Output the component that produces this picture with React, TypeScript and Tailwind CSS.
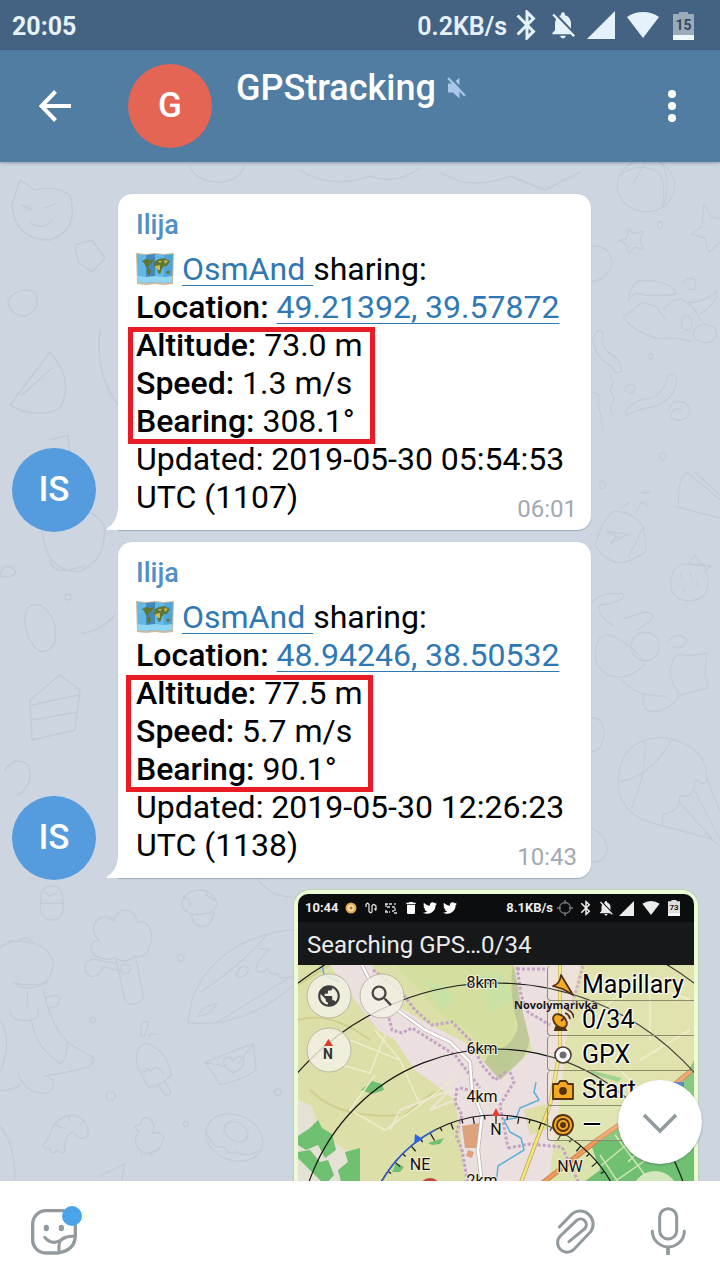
import type { ReactNode } from "react";
import { MdBluetooth, MdNotificationsOff, MdPublic, MdSearch, MdDelete } from "react-icons/md";
import { FaTwitter } from "react-icons/fa";

const rad = (deg: number) => (deg * Math.PI) / 180;

function SignalIcon({ className }: { className: string }) {
  return (
    <svg className={className} viewBox="0 0 28 28" fill="currentColor" aria-hidden="true">
      <path d="M28 0V28H0Z" />
    </svg>
  );
}

function WifiIcon({ className }: { className: string }) {
  return (
    <svg className={className} viewBox="0 0 32 26" fill="currentColor" aria-hidden="true">
      <path d="M16 26 0 5Q7 0 16 0T32 5Z" />
    </svg>
  );
}

function Battery({ level, fill, className, text }: { level: string; fill: string; className: string; text: string }) {
  return (
    <svg className={className} viewBox="0 0 21 28" aria-label={`Battery ${level}%`}>
      <path d="M6 0H15V2H21V28H0V2H6Z" fill={fill} />
      <path d="M0 23H21V28H0Z" fill="#f1f8fd" />
      <text x="10.5" y="18" textAnchor="middle" className={text}>
        {level}
      </text>
    </svg>
  );
}

function StatusBar() {
  return (
    <div className="flex h-[50px] shrink-0 items-center justify-between bg-[#446282] pl-3 pr-[26px] pt-1 text-[25px] font-bold text-[#e6f2fb]">
      <span>20:05</span>
      <div className="flex items-center">
        <span className="font-semibold">0.2KB/s</span>
        <MdBluetooth className="ml-0.5 size-9 -mt-1" />
        <MdNotificationsOff className="ml-0.5 size-8 -mt-1" />
        <SignalIcon className="ml-2 size-7 -mt-1" />
        <WifiIcon className="ml-3 h-[26px] w-8 -mt-1" />
        <Battery level="15" fill="#9aabba" className="ml-3.5 h-7 w-[21px] -mt-0.5" text="fill-[#34495e] text-[14px] font-bold" />
      </div>
    </div>
  );
}

function Header() {
  return (
    <header className="relative z-10 flex h-28 shrink-0 items-center bg-[#517da2] text-white shadow-[0_1px_3px_rgba(70,90,120,0.5)]">
      <button type="button" aria-label="Back" className="ml-[39px] size-8">
        <svg viewBox="0 0 32 32" fill="none" stroke="currentColor" strokeWidth="4" className="size-8">
          <path d="M32 16H3M16.500 1.500 2.500 16 16.500 30.500" />
        </svg>
      </button>
      <div className="ml-[57px] flex size-[84px] items-center justify-center rounded-full bg-[#e56555] text-[35px] font-medium">G</div>
      <div className="ml-6 mt-4 flex flex-1 items-center gap-[11px] self-start">
        <h1 className="text-[36px] font-medium leading-[44px]">GPStracking</h1>
        <svg viewBox="0 0 19 22" className="h-[22px] w-[19px]" role="img" aria-label="Muted">
          <path d="M1 6.500H5L12.500 1V21.500L6 15.500H1Z" fill="#a9c8e8" />
          <path d="M3 0 19 16.500" stroke="#517da2" strokeWidth="2.200" />
          <path d="M1 1 18 18.800" stroke="#a9c8e8" strokeWidth="2.200" />
        </svg>
      </div>
      <button type="button" aria-label="More options" className="mr-8 flex w-8 flex-col items-center gap-1">
        <span className="size-2 rounded-full bg-white" />
        <span className="size-2 rounded-full bg-white" />
        <span className="size-2 rounded-full bg-white" />
      </button>
    </header>
  );
}

function Wallpaper() {
  return (
    <svg
      className="absolute inset-0 size-full"
      viewBox="0 162 720 1019"
      preserveAspectRatio="xMinYMin slice"
      fill="none"
      stroke="#c2cad8"
      strokeWidth="1.500"
      strokeLinecap="round"
      strokeLinejoin="round"
      aria-hidden="true"
    >
      <g transform="translate(0 860) scale(.3333)" strokeWidth="4">
        <path d="M122 120Q122 78 155 78T189 120Q195 180 155 180T122 120M125 130H188M135 95 150 110 170 98" />
        <path d="M345 292C320 305 278 295 272 265C272 245 290 240 300 243C275 225 272 185 305 172C325 168 340 175 342 188C345 140 400 135 412 187C445 178 462 215 452 250C445 285 420 298 405 288C385 308 360 305 345 292M348 298 375 420Q385 435 405 432 430 425 430 408L408 295M348 330 310 320Q300 350 275 350 250 340 255 312 275 290 300 302L350 310" />
        <circle cx="376" cy="326" r="15" />
        <path d="M545 135Q550 92 600 90 645 95 652 135 640 160 610 162 560 170 545 135M575 165Q580 200 610 200 640 190 641 158M550 110Q575 120 570 140M620 92Q615 110 645 120" />
        <path d="M565 488Q570 400 620 340 700 230 880 208M565 488Q640 500 740 465 820 430 880 375M605 395Q740 300 800 225M650 488 880 345M595 470Q600 440 650 430 640 460 595 470M780 265 810 268Q770 300 768 330 790 345 800 325 810 345 835 340 825 360 880 350" />
        <ellipse cx="728" cy="335" rx="20" ry="13" transform="rotate(-40 728 335)" />
        <path d="M0 262Q30 240 75 245 150 255 160 310 158 350 130 370 80 380 40 368M50 373Q80 400 145 365M82 395V440M130 390Q150 490 200 545 250 580 280 590 285 620 240 628 180 640 135 648M95 485Q105 560 180 610 205 600 200 545M55 640Q70 700 140 700 165 690 160 660L135 645M30 455Q35 480 70 482 120 485 115 450M135 415Q175 395 180 420 175 445 145 445M0 692Q40 690 60 675M25 245Q35 235 48 245M60 240Q75 225 98 245" />
        <circle cx="542" cy="293" r="10" />
        <circle cx="278" cy="480" r="8" />
        <circle cx="332" cy="708" r="14" />
        <circle cx="833" cy="697" r="10" />
        <circle cx="558" cy="792" r="8" />
        <path d="M412 620Q400 560 440 550 500 570 515 645 480 680 445 682ZM420 635Q440 640 440 625 455 640 465 622 485 625 490 640M475 675 495 705Q510 710 512 695L495 665M425 490Q435 480 446 488L432 530 422 525ZM445 530Q455 515 475 525" />
        <path d="M615 607 760 550 768 630Q720 665 660 673ZM615 607 680 620M760 550 715 610" />
        <path d="M700 638Q665 620 672 598 690 585 700 602 715 580 732 595 735 625 700 638" />
        <path d="M128 855Q150 835 155 805 180 765 220 765 265 780 265 825 240 850 220 815 190 830 195 875 180 885 172 870 155 890 148 865 135 870 128 855M165 795 195 805M205 768 210 785M255 780 240 795" />
        <path d="M415 815 403 800 420 795Q425 770 445 773 470 790 458 820 495 815 490 840 480 880 435 880 395 860 410 825M425 880V890M450 880 458 888" />
        <ellipse cx="703" cy="833" rx="88" ry="68" transform="rotate(22 703 833)" />
        <ellipse cx="708" cy="815" rx="38" ry="27" transform="rotate(28 708 815)" />
        <path d="M620 815Q640 870 670 860 690 890 710 875 740 895 780 870" />
        <path d="M295 950 375 912 365 960M0 800Q45 850 45 960M0 480Q40 540 0 640" />
        <path d="M770 55Q810 110 880 112" />
      </g>
      <g transform="translate(580 160) scale(.3333 .459)" strokeWidth="3">
        <ellipse cx="198" cy="56" rx="86" ry="57" />
        <path d="M115 35Q180 0 240 30 260 60 245 105M200 0 160 50M245 5Q275 50 250 100" />
        <path d="M118 175 140 172 145 150 160 160 188 155 180 175 190 195 165 190 145 203 140 185ZM335 162 365 145 372 95 395 125 420 128M335 162 375 170 385 202 420 180" />
        <path d="M35 187Q90 185 97 225 85 260 35 265M145 305Q150 265 190 262 280 265 290 292 220 300 165 290ZM130 343Q160 325 185 310L230 320 255 348M130 343Q160 375 240 390 290 385 335 395M250 325Q280 300 305 303 350 320 360 350M325 310Q380 310 410 285 415 310 360 335M310 270Q325 250 345 262 355 285 325 282" />
        <ellipse cx="375" cy="378" rx="35" ry="20" />
        <circle cx="320" cy="355" r="16" />
        <path d="M38 390Q55 360 70 378 60 400 85 420 120 430 125 460 105 470 95 450 45 430 38 390M135 550Q160 520 215 520 260 500 262 470 280 460 290 475 290 520 220 538 180 540 140 556ZM265 545Q275 520 315 528 340 545 320 562 280 575 272 555 285 535 305 545" />
        <path d="M90 470 100 485 90 500 102 520 92 540 98 560M35 505Q65 510 55 530L70 590M132 505Q140 482 165 492 165 512 145 508M295 750Q295 690 320 680L420 740M285 755 420 780M345 680 420 730" />
        <path d="M45 840Q65 785 100 765 160 765 190 800 200 840 195 855 130 885 100 875 60 860 45 840M80 810 145 815 90 835 110 820ZM190 800 145 865M130 755 150 745M165 770 185 745 205 755M185 725 210 725" />
        <path d="M272 920Q275 880 325 880L375 885Q395 930 370 950 325 970 290 952 270 940 272 920M325 880 345 860 360 880 395 885 370 895M300 900 305 910M330 900 335 910M350 920 355 930M310 930 315 940" />
        <path d="M35 965Q60 940 130 945 145 960 60 970 45 990 100 1015M130 1000 195 985Q230 985 210 1005L170 1025M45 1080Q50 1030 90 1035 170 1060 195 1100 130 1140 80 1120 45 1105 45 1080M265 1050Q290 1025 320 1045 315 1070 280 1060M275 1100Q280 1070 320 1080L380 1075 375 1120 385 1150 300 1165Q260 1130 275 1100M190 1165Q180 1210 240 1200 310 1180 290 1155M125 1130Q160 1170 260 1168" />
        <ellipse cx="196" cy="1060" rx="42" ry="31" />
        <path d="M115 1350Q120 1260 250 1258 380 1275 380 1345 385 1370 345 1350 345 1390 300 1385 300 1420 250 1425L245 1450Q110 1430 115 1350M195 1265Q200 1340 155 1410M275 1260Q220 1340 120 1355M245 1450 390 1478 420 1495M380 1345 420 1420M345 1375 420 1480M300 1400 395 1478" />
        <path d="M35 1215Q70 1215 72 1250 65 1290 35 1288M35 1455Q80 1470 82 1505 75 1530 35 1530" />
        <circle cx="213" cy="428" r="6" />
        <circle cx="248" cy="645" r="8" />
        <circle cx="68" cy="708" r="9" />
        <circle cx="240" cy="142" r="8" />
      </g>
      <path d="M12 205 20 180 35 190Q55 185 70 195 80 230 50 240 15 240 12 205M22 205 32 210M45 208 55 204M30 222Q42 232 52 220M190 166C195 185 235 190 245 166M300 170Q330 190 370 176 395 186 420 168M440 172Q470 192 510 176L545 190 580 172" />
      <path d="M8 300Q20 285 35 292 42 310 25 316 10 316 8 300M75 245 92 240 105 258 92 272 78 262ZM10 405 50 352Q75 380 60 408 35 420 10 405M22 395 52 368M100 330Q95 375 118 405" />
      <path d="M50 440 68 435 70 455M42 530Q45 570 78 572 108 560 104 525 92 508 78 512M50 560Q52 572 68 570L84 566M0 576Q4 560 15 570 18 578 0 576M25 620Q25 600 42 606 60 620 54 645 40 660 30 640 25 630 25 620M82 633Q100 632 115 615M30 700 60 675 80 690 75 730 32 740ZM32 705 78 695M32 720 78 712M5 770Q15 755 28 765 35 785 18 795" />
      <circle cx="68" cy="597" r="3" />
    </svg>
  );
}

function MapEmoji() {
  return (
    <svg viewBox="0 0 38 34" className="mr-2 inline-block h-[34px] w-[38px] align-[-6px]" role="img" aria-label="World map">
      <path d="M0 1 10 2 19 1 28 2 38 1 37 32 28 33 19 32 10 33 1 32Z" fill="#cdbb9f" />
      <path d="M1 2 10 3V31L2 30Z" fill="#63b7e2" />
      <path d="M10 3 19 2V30L10 31Z" fill="#4489bb" />
      <path d="M19 2 28 3V31L19 30Z" fill="#63b9e6" />
      <path d="M28 3 37 2 36 30 28 31Z" fill="#4fa5d6" />
      <path d="M1 24 10 25 19 24 28 25 36 24V30L28 31 19 30 10 31 2 30Z" fill="#8fd6f4" />
      <path d="M6 9 10 7 15 8 18 7 16 11 13 13 12 16 10 15 8 11ZM12 16 15 18 14 23 12 23 11 18ZM19 9 23 7 28 6 34 9 31 14 28 14 26 17 24 22 22 21 21 16 18 14ZM31 19 34 19 33 22 30 21Z" fill="#5f7634" />
      <path d="M19 14 24 13 24 18 22 18ZM28 8 32 9 29 12ZM22 9 26 9 24 11Z" fill="#cdbc48" />
    </svg>
  );
}

type Message = {
  coords: string;
  altitude: string;
  speed: string;
  bearing: string;
  updated: string;
  time: string;
  frame: string;
};

const messages: Message[] = [
  {
    coords: "49.21392, 39.57872",
    altitude: "73.0 m",
    speed: "1.3 m/s",
    bearing: "308.1°",
    updated: "2019-05-30 05:54:53 UTC (1107)",
    time: "06:01",
    frame: "-left-2",
  },
  {
    coords: "48.94246, 38.50532",
    altitude: "77.5 m",
    speed: "5.7 m/s",
    bearing: "90.1°",
    updated: "2019-05-30 12:26:23 UTC (1138)",
    time: "10:43",
    frame: "-left-2.5",
  },
];

function Field({ label, children }: { label: string; children: ReactNode }) {
  return (
    <p>
      <b className="font-medium">{`${label}:`}</b> {children}
    </p>
  );
}

function MessageRow({ message }: { message: Message }) {
  const link = "text-[#3078b4] underline decoration-1 underline-offset-[5px]";
  return (
    <article className="flex items-end pl-3">
      <div className="flex size-[84px] shrink-0 items-center justify-center rounded-full bg-[#549cdd] text-[35px] font-medium text-white">IS</div>
      <div className="relative mb-0.5 ml-[22px] w-[473px] max-w-full rounded-[14px] rounded-bl-none bg-white px-[18px] pb-3.5 pt-[13px] text-[32px] leading-[38px] text-black shadow-[0_1px_1px_#9ca9b8,0_0_1px_#aab6c4]">
        <svg viewBox="0 0 13 24" className="absolute -left-3 bottom-0 h-6 w-[13px]" aria-hidden="true">
          <path d="M13 0H12Q12 16 1 22.500 0 24 2 24H13Z" fill="#fff" />
        </svg>
        <h2 className="mb-[7px] text-[27px] font-medium leading-9 text-[#5090c6]">Ilija</h2>
        <p>
          <MapEmoji />
          <a href="#osmand" className={link}>
            OsmAnd&nbsp;
          </a>
          sharing:
        </p>
        <Field label="Location">
          <a href="#location" className={link}>
            {message.coords}
          </a>
        </Field>
        <div className="relative">
          <Field label="Altitude">{message.altitude}</Field>
          <Field label="Speed">{message.speed}</Field>
          <Field label="Bearing">{message.bearing}</Field>
          <div className={`absolute top-px h-[117px] w-[247px] border-[5px] border-[#e91c26] ${message.frame}`} />
        </div>
        <p>
          {`Updated: ${message.updated}`}
          <time className="float-right -mr-1 mt-[15px] h-5 text-[24px] leading-8 text-[#a1aab3]">{message.time}</time>
        </p>
      </div>
    </article>
  );
}

function MapDrawing() {
  const ticks = Array.from({ length: 35 }, (_, i) => (i - 17) * 5);
  return (
    <svg viewBox="298 965 396 220" className="block w-full" role="img" aria-label="Map with distance rings">
      <rect x="298" y="965" width="396" height="220" fill="#dddfa8" />
      <g fill="#d3de9f">
        <path d="M395 965H520L510 1075Q480 1060 470 1030 440 1020 420 990Z" />
        <path d="M560 1100H640V1185H540Z" fill="#dce2ab" />
      </g>
      <path d="M425 980Q450 985 455 1000L440 1010ZM480 965Q490 980 500 970L512 1000 490 1015Z" fill="#c6e2aa" opacity=".7" />
      <path d="M513 965Q522 1000 530 1012 536 1060 500 1080L482 1066 492 1050Q512 1050 518 1026 508 990 513 965" fill="#a3b487" opacity=".5" />
      <path d="M298 985 330 965M298 1020Q330 1010 370 1040M400 1120Q440 1080 460 1090M310 1090Q340 1120 400 1115" stroke="#d0cf8e" strokeWidth="2" fill="none" />
      {/* Built-up areas */}
      <path d="M330 965H372L388 1000 430 1025 470 1045 482 1060 500 1080 532 1050 520 1000 514 965H580L566 1040 560 1100 548 1185H466L460 1130 455 1100 436 1085 415 1070 395 1040 378 1030 355 1000Z" fill="#ebdfdf" />
      <path d="M298 1100 312 1106 320 1130 345 1150 360 1150 360 1185H298Z" fill="#e3e2d4" />
      <path d="M445 1080 455 1100 430 1110 450 1090 400 1110 390 1130" stroke="#ece6d2" strokeWidth="2" fill="none" />
      <path d="M524 1110 546 1104 550 1128 530 1135Z" fill="#dcdfa6" />
      {/* Woods */}
      <g fill="#6fc070">
        <path d="M298 1136 310 1128 318 1120 322 1128 332 1134 336 1150 325 1158 318 1145 306 1150 298 1145ZM298 1152 310 1150 320 1162 328 1160 334 1175 325 1185 312 1172 298 1158ZM345 1152 360 1148V1185H342L338 1170 348 1162Z" />
        <path d="M361 1090 372 1081 382 1084 384 1090 372 1094Z" />
        <path d="M392 1172 396 1163 404 1167 400 1172ZM428 1143 444 1138 440 1144 432 1145Z" />
        <path d="M592 1147 625 1120 650 1160 640 1185H580L600 1170ZM640 1165 694 1060V1185H630Z" />
        <path d="M590 1070 622 1078 618 1082 592 1074Z" opacity=".7" />
      </g>
      <path d="M600 1155 620 1185M615 1135 645 1175M590 1175 650 1125M610 1185 660 1150M628 1162 650 1140" stroke="#cfe6b4" strokeWidth="1.500" />
      <path d="M462 1126 480 1123 478 1148 465 1148ZM468 1150 474 1152 472 1158 466 1156Z" fill="#dba27b" />
      {/* Field tracks */}
      <g fill="none" stroke="#efeccb" strokeWidth="1.500">
        <path d="M340 1045 325 1060 370 1073 385 1035M350 1040 400 1060 420 1105 385 1130 350 1110 375 1075M420 1105 455 1078M400 1060 375 1030" />
        <path d="M600 1010 640 980 690 1000M640 1060 690 1030M650 975V1040M610 1060 650 1100" />
      </g>
      {/* Rail and district borders */}
      <g fill="none" stroke="#c5a3c4" strokeWidth="3" strokeDasharray="3 2">
        <path d="M373 970 400 990 415 1010 432 1025 452 1022 470 1040 482 1065 495 1080 506 1072" />
        <path d="M389 1018 392 1030 402 1033 412 1028 455 1055 480 1088" />
        <path d="M457 1088 455 1102 462 1115 456 1135 462 1150 468 1185M460 1088 478 1092" />
        <path d="M517 967 521 995 528 1012 550 1025M517 969H545M583 966 572 1005" />
        <path d="M508 1148 530 1144 562 1147 568 1160 580 1185M510 1072 514 1082 500 1105 508 1148" />
      </g>
      {/* Roads */}
      <g fill="none" strokeLinejoin="round">
        <path d="M362 965 372 985 400 1012 425 1030 450 1042 470 1062 472 1090 482 1115 478 1150 482 1185" stroke="#b9b4b0" strokeWidth="4" />
        <path d="M362 965 372 985 400 1012 425 1030 450 1042 470 1062 472 1090 482 1115 478 1150 482 1185" stroke="#fff" strokeWidth="2.500" />
        <path d="M560 965V1050L550 1105 520 1185" stroke="#b9a84e" strokeWidth="4" />
        <path d="M560 965V1050L550 1105 520 1185" stroke="#f5e57a" strokeWidth="2.500" />
        <path d="M540 1185 600 1138 660 1097 692 1070" stroke="#c27743" strokeWidth="5" />
        <path d="M540 1185 600 1138 660 1097 692 1070" stroke="#ef9a5b" strokeWidth="3.500" />
        <path d="M536 1082 534 1092 539 1100 520 1108 516 1118 504 1120 510 1132 521 1138 524 1150 498 1166 496 1185M322 965 324 975 340 982" stroke="#5fb2d8" strokeWidth="1.500" />
      </g>
      {/* Distance rings, 33 px per kilometre */}
      <g fill="none" stroke="#161616" strokeWidth="1.200">
        <circle cx="496" cy="1247" r="330" />
        <circle cx="496" cy="1247" r="264" />
        <circle cx="496" cy="1247" r="198" />
        <circle cx="496" cy="1247" r="132" />
        {ticks.map((deg) => {
          const inner = deg % 30 === 0 ? 123 : deg % 10 === 0 ? 125 : 128;
          const s = Math.sin(rad(deg));
          const c = Math.cos(rad(deg));
          return <path key={deg} d={`M${496 + 132 * s} ${1247 - 132 * c}L${496 + inner * s} ${1247 - inner * c}`} />;
        })}
      </g>
      <path d="M382 1181A132 132 0 0 1 436 1129.500" fill="none" stroke="#3563c9" strokeWidth="1.500" />
      <path d="M415 1134 423 1139 414 1144Z" fill="#2c66e3" />
      <path d="M496 1108 500 1116H492Z" fill="#e63d2c" />
      <circle cx="430" cy="1189" r="11" fill="#c8403c" />
      <circle cx="655" cy="1194" r="23" fill="#eef0cf" opacity=".8" />
      <rect x="670" y="1082" width="14" height="14" fill="#3b6fc9" />
      <g className="font-[Roboto] text-[16px]" textAnchor="middle" fill="#111" stroke="#f1eedc" strokeWidth="2" paintOrder="stroke">
        <text x="482" y="988">8km</text>
        <text x="482" y="1054">6km</text>
        <text x="482" y="1102">4km</text>
        <text x="482" y="1186">2km</text>
        <text x="496" y="1135">N</text>
        <text x="420" y="1170">NE</text>
        <text x="570" y="1172">NW</text>
      </g>
      <g fill="#f3f1e6" fillOpacity=".82" stroke="#b9b8a4" strokeWidth="1">
        <circle cx="329" cy="996" r="22" />
        <circle cx="382" cy="996" r="22" />
        <circle cx="329" cy="1050" r="22" />
      </g>
      <MdPublic x="316" y="983" size={26} color="#3d3d3d" />
      <MdSearch x="368" y="982" size={28} color="#4a4540" />
      <path d="M328.500 1039 333 1046H324Z" fill="#dd3a32" />
      <text x="328" y="1058.500" textAnchor="middle" className="font-[Roboto] text-[14px] font-bold" fill="#333">
        N
      </text>
    </svg>
  );
}

const widgets: { label: string; icon: ReactNode }[] = [
  {
    label: "Mapillary",
    icon: <path d="M9 1 21 21 11 15 1 12Q8 10 9 1Z" fill="#f6ab2a" stroke="#52320f" strokeWidth="1.800" strokeLinejoin="round" />,
  },
  {
    label: "0/34",
    icon: (
      <g stroke="#52320f" strokeWidth="1.800">
        <path d="M4 18 3 21H14L12 18Z" fill="#52320f" />
        <ellipse cx="8" cy="12" rx="5.500" ry="8" transform="rotate(-45 8 12)" fill="#f6a81f" />
        <path d="M9 12 13 8" />
        <path d="M13 4Q17 5 18 10M14 0Q21 2 22 9" fill="none" />
      </g>
    ),
  },
  {
    label: "GPX",
    icon: (
      <g>
        <circle cx="11" cy="11" r="8" fill="#fff" stroke="#4d3c31" strokeWidth="1.600" />
        <circle cx="11" cy="11" r="3.500" fill="#6d6d6d" />
      </g>
    ),
  },
  {
    label: "Start",
    icon: (
      <g stroke="#52320f" strokeWidth="1.800">
        <path d="M1 5H6L8 2H14L16 5H21V20H1Z" fill="#f6a81f" strokeLinejoin="round" />
        <circle cx="11" cy="12" r="3" fill="#52320f" />
      </g>
    ),
  },
  {
    label: "—",
    icon: (
      <g fill="#f6a81f" stroke="#52320f" strokeWidth="1.800">
        <circle cx="11" cy="11" r="10" />
        <circle cx="11" cy="11" r="6" />
        <circle cx="11" cy="11" r="2" fill="#52320f" />
      </g>
    ),
  },
];

function Photo() {
  return (
    <figure className="ml-auto mr-[22px] w-[404px] max-w-full rounded-t-[16px] bg-[#ecfbd6] p-1 shadow-[0_0_1px_1px_#b9d3b4]">
      <div className="overflow-hidden rounded-t-[10px]">
        <div className="flex h-7 items-center bg-[#0c0d0f] pl-[7px] pr-3.5 text-[13px] font-bold text-[#ececec]">
          <span>10:44</span>
          <svg viewBox="0 0 12 12" className="ml-1.5 size-3" aria-hidden="true">
            <circle cx="6" cy="6" r="5.500" fill="#e0a64a" />
            <circle cx="6" cy="6" r="3.500" fill="#f5ddb0" />
            <circle cx="6" cy="6" r="1.500" fill="#b27a30" />
          </svg>
          <svg viewBox="0 0 12 12" className="ml-2 size-3" fill="none" stroke="#ddd" strokeWidth="1.300" aria-hidden="true">
            <path d="M1 5V2.500Q2.500 0 4 2.500V9.500Q6 12 7 9.500V4Q8.500 1 11 4V8M9.500 6.500 11 8.500" />
          </svg>
          <svg viewBox="0 0 12 12" className="ml-2 size-3" fill="none" stroke="#ddd" strokeWidth="1.300" aria-hidden="true">
            <path d="M0 2H8M10 1V3M1 2V5H5M7 5H10V9H7M0 10H5M1 8V10M9 11H12" strokeDasharray="3 1" />
          </svg>
          <MdDelete className="ml-1.5 size-4 text-white" />
          <FaTwitter className="ml-1 size-3.5 text-white" />
          <FaTwitter className="ml-1.5 size-3.5 text-white" />
          <span className="ml-auto">8.1KB/s</span>
          <svg viewBox="0 0 16 16" className="ml-1 size-4" fill="none" stroke="#777" strokeWidth="1.300" aria-hidden="true">
            <circle cx="8" cy="8" r="5.500" />
            <path d="M8 0V4M8 12V16M0 8H4M12 8H16" />
          </svg>
          <MdBluetooth className="ml-1 size-[18px]" />
          <MdNotificationsOff className="ml-0.5 size-[18px]" />
          <SignalIcon className="ml-1 size-[15px]" />
          <WifiIcon className="ml-2 h-3.5 w-[18px]" />
          <Battery level="73" fill="#dedede" className="ml-2 h-4 w-3" text="fill-[#222] text-[14px] font-bold" />
        </div>
        <div className="flex h-[43px] items-center bg-[#17181a] pl-[9px] pt-0.5 text-[24px] text-[#ececec]">Searching GPS…0/34</div>
        <div className="relative">
          <MapDrawing />
          <ul className="absolute right-0 top-px w-[147px] text-[25px] text-black [text-shadow:0_0_2px_#fff,0_0_3px_#fff,1px_1px_1px_#fff,-1px_-1px_1px_#fff]">
            {widgets.map((w) => (
              <li key={w.label} className="flex h-[35px] items-center gap-2 rounded-l-sm border-b border-l border-[#8c8d70] bg-[#f4f4cc]/20 pl-1 pt-[3px]">
                <svg viewBox="0 0 22 22" className="size-[22px] shrink-0" aria-hidden="true">
                  {w.icon}
                </svg>
                {w.label}
              </li>
            ))}
          </ul>
          <span className="absolute left-[216px] top-8 font-['Open_Sans'] text-[11px] font-bold leading-4 text-[#161616] [text-shadow:0_0_2px_#f1e8e3]">
            Novolymarivka
          </span>
        </div>
      </div>
    </figure>
  );
}

function Composer() {
  return (
    <form className="relative z-10 flex h-[99px] shrink-0 items-center bg-white pl-[30px] pr-[34px] text-[#8e979c]">
      <button type="button" aria-label="Stickers and emoji" className="h-[52px] w-[53px]">
        <svg viewBox="90 75 159 156" className="h-[52px] w-[53px]" fill="none" stroke="#929a9e" strokeWidth="10" strokeLinecap="round">
          <path d="M190 92H138A40 40 0 0 0 98 132V179A40 40 0 0 0 138 219H172Q226 212 226 165V131" />
          <path d="M134 172Q155 197 182 181 200 166 224 169M177 217V197Q178 172 205 170" strokeWidth="9" />
          <ellipse cx="139" cy="144" rx="8" ry="10" fill="#929a9e" stroke="none" />
          <ellipse cx="184" cy="144" rx="8" ry="10" fill="#929a9e" stroke="none" />
          <circle cx="216" cy="108" r="30" fill="#4ba3ea" stroke="none" />
        </svg>
      </button>
      <input type="text" aria-label="Message" className="mx-4 h-16 min-w-0 flex-1 bg-transparent text-[32px] text-black outline-none" />
      <button type="button" aria-label="Attach file" className="mr-[53px] h-12 w-[42px]">
        <svg viewBox="585 83 126 144" className="h-12 w-[42px]" fill="none" stroke="#929a9e" strokeWidth="9" strokeLinecap="round">
          <path d="M598 143 637 103A39 39 0 0 1 692 157L642 210A28.600 28.600 0 0 1 601 170L650 123A17.400 17.400 0 0 1 675 147L627 187" />
        </svg>
      </button>
      <button type="button" aria-label="Record voice message" className="h-12 w-9">
        <svg viewBox="870 83 108 144" className="h-12 w-9" fill="none" stroke="#929a9e" strokeWidth="9" strokeLinecap="round">
          <rect x="899" y="88" width="51" height="91" rx="25" />
          <path d="M877 155A48 48 0 0 0 973 155" />
          <path d="M924 203V227" strokeWidth="11" strokeLinecap="butt" />
        </svg>
      </button>
    </form>
  );
}

export default function App() {
  return (
    <div className="flex h-screen flex-col overflow-hidden bg-[#cdd6e0] font-[Roboto,sans-serif]">
      <StatusBar />
      <Header />
      <main className="relative min-h-0 flex-1 overflow-hidden">
        <Wallpaper />
        <div className="relative flex flex-col gap-2.5 pt-8">
          {messages.map((m) => (
            <MessageRow key={m.time} message={m} />
          ))}
          <Photo />
        </div>
        <button
          type="button"
          aria-label="Scroll to latest"
          className="absolute bottom-[17px] right-[18px] flex size-[84px] items-center justify-center rounded-full bg-white shadow-[0_1px_2px_rgba(80,90,100,0.5)]"
        >
          <svg viewBox="0 0 36 22" className="mt-1 h-[22px] w-9" fill="none" stroke="#929a9e" strokeWidth="3.500">
            <path d="M2 2 18 18 34 2" />
          </svg>
        </button>
      </main>
      <Composer />
    </div>
  );
}
